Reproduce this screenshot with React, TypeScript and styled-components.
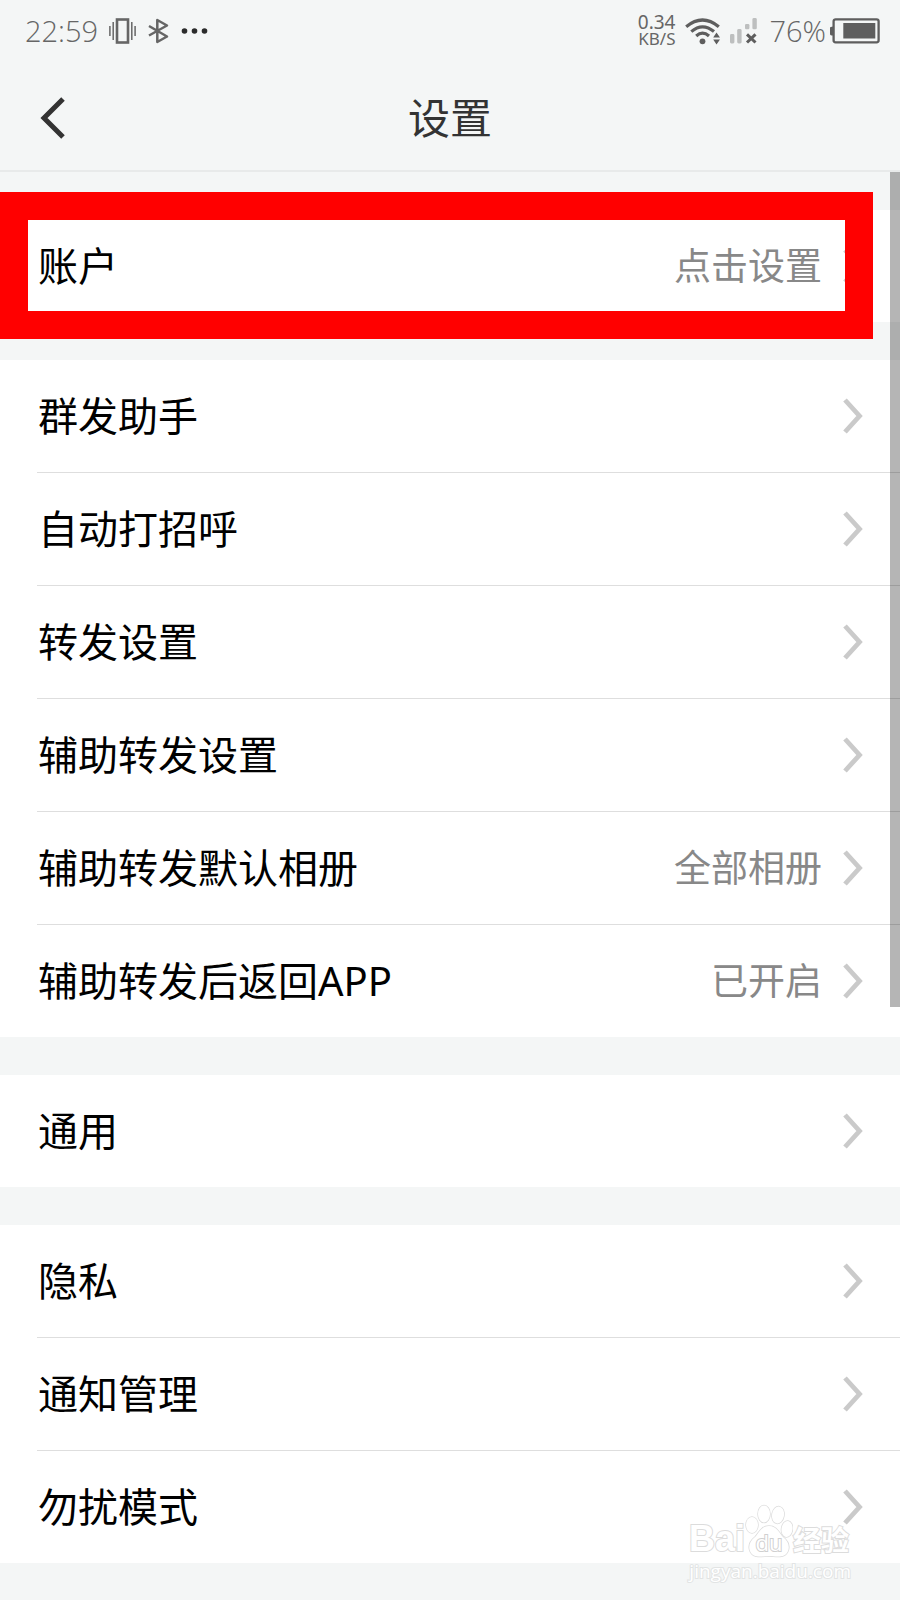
import React from "react";
import styled, { createGlobalStyle } from "styled-components";

const GlobalStyle = createGlobalStyle`
  *, *::before, *::after { box-sizing: border-box; }
  body {
    margin: 0;
    background: #f4f6f6;
    color: #000;
    font-family: "Noto Sans", "Noto Sans CJK SC", sans-serif;
  }
  button {
    border: 0;
    padding: 0;
    background: none;
    color: inherit;
    font: inherit;
    cursor: pointer;
  }
  svg { display: block; flex: none; }
`;

const Screen = styled.div`
  position: relative;
  min-height: 100vh;
  overflow: hidden;
`;

const StatusBar = styled.div`
  display: flex;
  align-items: center;
  justify-content: space-between;
  height: 62px;
  padding: 0 20px 0 25px;
  color: #666;
  font-family: "Open Sans", "Noto Sans", sans-serif;
  font-weight: 300;
  font-size: 29px;
  line-height: 36px;
`;

const StatusGroup = styled.div`
  display: flex;
  align-items: center;
`;

const Clock = styled.time`
  margin-right: 11px;
`;

const BatteryLevel = styled.span`
  margin-right: 4px;
`;

const StatusIcon = styled.svg<{ $gap?: number }>`
  margin-right: ${(p) => p.$gap ?? 0}px;
`;

const Speed = styled.div`
  display: flex;
  flex-direction: column;
  align-items: flex-end;
  margin-right: 10px;
  padding-bottom: 2px;
  font-family: "Noto Sans", sans-serif;
  font-size: 19px;
  font-weight: 400;
  line-height: 18px;
`;

const SpeedUnit = styled.span`
  font-size: 17px;
  line-height: 16px;
`;

const TitleBar = styled.header`
  display: grid;
  grid-template-columns: 100px 1fr 100px;
  align-items: center;
  height: 110px;
  padding-top: 3px;
  border-bottom: 2px solid #e8eaea;
`;

const BackButton = styled.button`
  display: flex;
  align-items: center;
  height: 100px;
  padding-left: 40px;
`;

const Title = styled.h1`
  margin: 0;
  color: #333;
  font-size: 42px;
  font-weight: 400;
  line-height: 56px;
  text-align: center;
`;

const Content = styled.main`
  display: flex;
  flex-direction: column;
  gap: 38px;
  padding: 38px 0;
`;

const Group = styled.ul`
  position: relative;
  margin: 0;
  padding: 0 0 0 37px;
  list-style: none;
  background: #fff;
`;

const Item = styled.li`
  & + & { border-top: 1px solid #dedede; }
`;

const RowButton = styled.button`
  display: flex;
  align-items: center;
  width: 100%;
  height: 112px;
  padding: 0 36px 0 1px;
  text-align: left;
`;

const Label = styled.span`
  flex: 1;
  font-size: 40px;
  line-height: 56px;
`;

const Value = styled.span`
  margin-right: 21px;
  color: #888;
  font-size: 37px;
  line-height: 56px;
`;

const Highlight = styled.div`
  position: absolute;
  top: -18px;
  bottom: -17px;
  left: 0;
  right: 27px;
  border: 28px solid #f00;
  pointer-events: none;
`;

const ScrollThumb = styled.div`
  position: absolute;
  top: 172px;
  right: 0;
  width: 10px;
  height: 835px;
  background: rgba(0, 0, 0, 0.29);
`;

const Watermark = styled.div`
  position: absolute;
  right: 49px;
  bottom: 18px;
  display: flex;
  flex-direction: column;
  align-items: flex-end;
  color: #fff;
  font-family: "Open Sans", "Noto Sans CJK SC", sans-serif;
  pointer-events: none;
`;

const Brand = styled.div`
  display: flex;
  align-items: flex-end;
  height: 58px;
  padding-right: 2px;
  -webkit-text-stroke: 2px #dcdcdc;
  paint-order: stroke fill;
`;

const BrandLatin = styled.span`
  font-family: "Liberation Sans", sans-serif;
  font-size: 36px;
  font-weight: 700;
  line-height: 40px;
`;

const Paw = styled.div`
  position: relative;
  display: flex;
  width: 48px;
  height: 58px;
`;

const PawText = styled.span`
  position: absolute;
  left: 0;
  right: 0;
  bottom: 5px;
  font-size: 22px;
  line-height: 24px;
  text-align: center;
  -webkit-text-stroke: 2px #d0d0d0;
`;

const BrandChinese = styled.span`
  font-size: 28px;
  font-weight: 700;
  line-height: 38px;
`;

const Site = styled.span`
  font-size: 19px;
  line-height: 24px;
  -webkit-text-stroke: 2px #e2e4e4;
  paint-order: stroke fill;
`;

interface Setting {
  label: string;
  value?: string;
}

const groups: { highlighted?: boolean; items: Setting[] }[] = [
  { highlighted: true, items: [{ label: "账户", value: "点击设置" }] },
  {
    items: [
      { label: "群发助手" },
      { label: "自动打招呼" },
      { label: "转发设置" },
      { label: "辅助转发设置" },
      { label: "辅助转发默认相册", value: "全部相册" },
      { label: "辅助转发后返回APP", value: "已开启" },
    ],
  },
  { items: [{ label: "通用" }] },
  { items: [{ label: "隐私" }, { label: "通知管理" }, { label: "勿扰模式" }] },
];

const Chevron = () => (
  <svg width="21" height="36" viewBox="0 0 21 36" fill="none" stroke="#cacaca" strokeWidth="4.8" aria-hidden="true">
    <path d="M2 2 16.5 18 2 34" />
  </svg>
);

const VibrateIcon = () => (
  <StatusIcon $gap={12} width="27" height="26" viewBox="0 0 27 26" fill="none" stroke="#666" aria-hidden="true">
    <rect x="8" y="1.5" width="11" height="23" strokeWidth="2.6" />
    <path d="M4.2 4v18M22.8 4v18M.9 8v10M26.1 8v10" strokeWidth="1.5" />
  </StatusIcon>
);

const BluetoothIcon = () => (
  <StatusIcon $gap={12} width="21" height="26" viewBox="0 0 21 26" fill="none" stroke="#666" strokeWidth="2.5" aria-hidden="true">
    <path d="M1 8 19 18.5 9.3 24V2L19 7.5 1 17.5" strokeLinejoin="round" />
  </StatusIcon>
);

const MoreIcon = () => (
  <svg width="28" height="8" viewBox="0 0 28 8" fill="#2b2b2b" aria-hidden="true">
    <circle cx="3.5" cy="4" r="2.8" />
    <circle cx="13.5" cy="4" r="2.8" />
    <circle cx="23.5" cy="4" r="2.8" />
  </svg>
);

const WifiIcon = () => (
  <StatusIcon $gap={9} width="36" height="27" viewBox="0 0 36 27" fill="none" stroke="#5e5e5e" strokeWidth="3.2" aria-hidden="true">
    <path d="M1.2 8.8Q17.5-4.8 33.8 8.8M6.3 13.6Q17.5 4 29 13.6M11.2 18Q17.5 12.4 24 18" />
    <circle cx="17.5" cy="23.3" r="2.9" fill="#5e5e5e" stroke="none" />
    <path d="M28.2 19.5 31.5 14.5 35 19.5zM28.2 21.5 31.5 26.5 35 21.5z" fill="#5e5e5e" stroke="none" />
  </StatusIcon>
);

const SignalIcon = () => (
  <StatusIcon $gap={11} width="28" height="26" viewBox="0 0 28 26" aria-hidden="true">
    <g fill="#bdbfbf">
      <rect x="0" y="16" width="4.4" height="9.5" rx="1.4" />
      <rect x="7.2" y="11" width="4.4" height="14.5" rx="1.4" />
      <rect x="15" y="6" width="4.4" height="5.3" rx="1.2" />
      <rect x="22.4" y="0" width="4.4" height="11.3" rx="1.4" />
    </g>
    <path d="M17 16.3 25.5 24.5M25.5 16.3 17 24.5" stroke="#5e5e5e" strokeWidth="3" />
  </StatusIcon>
);

const BatteryIcon = () => (
  <svg width="50" height="26" viewBox="0 0 50 26" aria-hidden="true">
    <path d="M0 10q0-1.5 3-1.5v9q-3 0-3-1.5z" fill="#5e5e5e" />
    <rect x="3.6" y="1.3" width="45" height="23" rx="2" fill="none" stroke="#5e5e5e" strokeWidth="2.3" />
    <rect x="13.3" y="5" width="32" height="15.5" fill="#5e5e5e" />
  </svg>
);

const SettingRow = ({ label, value }: Setting) => (
  <Item>
    <RowButton type="button">
      <Label>{label}</Label>
      {value && <Value>{value}</Value>}
      <Chevron />
    </RowButton>
  </Item>
);

export default function App() {
  return (
    <Screen>
      <GlobalStyle />
      <StatusBar>
        <StatusGroup>
          <Clock>22:59</Clock>
          <VibrateIcon />
          <BluetoothIcon />
          <MoreIcon />
        </StatusGroup>
        <StatusGroup>
          <Speed>
            <span>0.34</span>
            <SpeedUnit>KB/S</SpeedUnit>
          </Speed>
          <WifiIcon />
          <SignalIcon />
          <BatteryLevel>76%</BatteryLevel>
          <BatteryIcon />
        </StatusGroup>
      </StatusBar>
      <TitleBar>
        <BackButton type="button" aria-label="返回">
          <svg width="26" height="42" viewBox="0 0 26 42" fill="none" stroke="#333" strokeWidth="5" aria-hidden="true">
            <path d="M23 2 4 21 23 40" />
          </svg>
        </BackButton>
        <Title>设置</Title>
      </TitleBar>
      <Content>
        {groups.map((group) => (
          <Group key={group.items[0].label}>
            {group.items.map((item) => (
              <SettingRow key={item.label} {...item} />
            ))}
            {group.highlighted && <Highlight />}
          </Group>
        ))}
      </Content>
      <ScrollThumb />
      <Watermark>
        <Brand>
          <BrandLatin>Bai</BrandLatin>
          <Paw>
            <svg width="48" height="58" viewBox="0 0 48 58" fill="#fff" stroke="#dcdcdc" strokeWidth="1.5" aria-hidden="true">
              <ellipse cx="7" cy="24" rx="6" ry="8" />
              <ellipse cx="19" cy="13" rx="6" ry="8.5" />
              <ellipse cx="33" cy="14" rx="6" ry="8.5" transform="rotate(10 33 14)" />
              <ellipse cx="42" cy="28" rx="5.5" ry="8" transform="rotate(8 42 28)" />
              <path d="M24 25C16 25 14 32 10 36 5 40 3 45 5 50 8 58 18 55 24 55S40 58 43 50C45 45 43 40 38 36 34 32 32 25 24 25z" />
            </svg>
            <PawText>du</PawText>
          </Paw>
          <BrandChinese>经验</BrandChinese>
        </Brand>
        <Site>jingyan.baidu.com</Site>
      </Watermark>
    </Screen>
  );
}
